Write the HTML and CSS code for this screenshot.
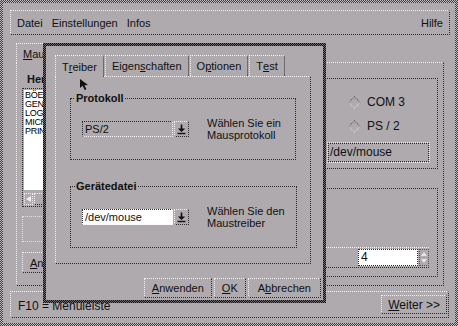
FILE: index.html
```html
<!DOCTYPE html>
<html lang="de">
<head>
    <meta charset="UTF-8">
    <meta name="viewport" content="width=device-width, initial-scale=1.0">
    <title>Maus einrichten</title>
    <link rel="stylesheet" href="styles.css">
</head>
<body>
<div class="screen">
    <!-- Hauptfenster -->
    <div class="window">
        <div class="window-inner">
            <div class="menubar">
                <span class="menu-item">Datei</span>
                <span class="menu-item">Einstellungen</span>
                <span class="menu-item">Infos</span>
                <span class="menu-item menu-help">Hilfe</span>
            </div>

            <div class="notebook notebook-rear">
                <div class="tabs">
                    <div class="tab active"><u>M</u>aus</div>
                </div>
                <div class="tab-panel rear-panel">
                    <div class="rear-left">
                        <div class="caption">Hersteller</div>
                        <div class="listbox">
                            <ul class="list">
                                <li>BÖEDER</li>
                                <li>GENIUS</li>
                                <li>LOGITECH</li>
                                <li>MICROSOFT</li>
                                <li>PRINCETON</li>
                            </ul>
                            <div class="hscroll">
                                <span class="scroll-arrow"></span>
                                <span class="scroll-thumb"></span>
                            </div>
                        </div>
                        <div class="empty-box"></div>
                        <button class="btn"><u>A</u>nwenden</button>
                    </div>
                    <div class="rear-right">
                        <div class="frame port-frame">
                            <div class="radios">
                                <label class="radio"><span class="diamond"></span>COM 1</label>
                                <label class="radio"><span class="diamond"></span>COM 3</label>
                                <label class="radio"><span class="diamond"></span>COM 2</label>
                                <label class="radio"><span class="diamond"></span>PS / 2</label>
                            </div>
                            <div class="text-field">/dev/mouse</div>
                        </div>
                        <div class="frame speed-frame">
                            <div class="spin-row">
                                <span class="spin-label">Tempo</span>
                                <div class="spinner">
                                    <span class="spin-value">4</span>
                                    <span class="spin-arrows">
                                        <span class="spin-up"></span>
                                        <span class="spin-down"></span>
                                    </span>
                                </div>
                            </div>
                        </div>
                    </div>
                </div>
            </div>

            <div class="statusbar">
                <span class="status-text">F10 = Menüleiste</span>
                <button class="btn btn-next"><u>W</u>eiter &gt;&gt;</button>
            </div>
        </div>
    </div>

    <!-- Dialog Treiber -->
    <div class="dialog">
        <div class="dialog-body">
            <div class="notebook notebook-dialog">
                <div class="tabs">
                    <div class="tab active">T<u>r</u>eiber</div>
                    <div class="tab">Eigen<u>s</u>chaften</div>
                    <div class="tab">O<u>p</u>tionen</div>
                    <div class="tab">T<u>e</u>st</div>
                </div>
                <div class="tab-panel dialog-panel">
                    <fieldset class="group-box">
                        <legend>Protokoll</legend>
                        <div class="option-row">
                            <div class="combo">
                                <span class="combo-field">PS/2</span>
                                <span class="drop-btn">
                                    <svg width="9" height="11" viewBox="0 0 9 11">
                                        <path d="M4.5 0.5 V5" stroke="#111" stroke-width="1.6"/>
                                        <path d="M0.8 4.5 H8.2 L4.5 8 Z" fill="#111"/>
                                        <path d="M0.5 9.5 H8.5" stroke="#111" stroke-width="1.4"/>
                                    </svg>
                                </span>
                            </div>
                            <p class="hint">Wählen Sie ein<br>Mausprotokoll</p>
                        </div>
                    </fieldset>
                    <fieldset class="group-box group-second">
                        <legend>Gerätedatei</legend>
                        <div class="option-row">
                            <div class="combo">
                                <span class="combo-field combo-edit">/dev/mouse</span>
                                <span class="drop-btn">
                                    <svg width="9" height="11" viewBox="0 0 9 11">
                                        <path d="M4.5 0.5 V5" stroke="#111" stroke-width="1.6"/>
                                        <path d="M0.8 4.5 H8.2 L4.5 8 Z" fill="#111"/>
                                        <path d="M0.5 9.5 H8.5" stroke="#111" stroke-width="1.4"/>
                                    </svg>
                                </span>
                            </div>
                            <p class="hint">Wählen Sie den<br>Maustreiber</p>
                        </div>
                    </fieldset>
                </div>
            </div>
            <div class="dialog-buttons">
                <button class="btn"><u>A</u>nwenden</button>
                <button class="btn"><u>O</u>K</button>
                <button class="btn btn-cancel">A<u>b</u>brechen</button>
            </div>
        </div>
        <svg class="cursor" width="11" height="12" viewBox="0 0 11 12">
            <path d="M0 0 L0 9 L2.6 6.8 L4.6 11 L6.4 10.2 L4.5 6.2 L8 6 Z" fill="#111"/>
        </svg>
    </div>
</div>
</body>
</html>
```

FILE: styles.css
```css
* {
    box-sizing: border-box;
}
body {
    margin: 0;
    font-family: "Liberation Sans", Arial, sans-serif;
    font-size: 11px;
    color: #111;
    background: #aeaaae;
}
u {
    text-underline-offset: 1px;
}
.screen {
    position: relative;
    width: 458px;
    height: 326px;
    overflow: hidden;
}

/* Hauptfenster */
.window {
    height: 100%;
    padding: 3px;
    background: repeating-conic-gradient(#3a3a3a 0 25%, #c4c0c4 0 50%) 0 0 / 2px 2px;
}
.window-inner {
    height: 100%;
    background: #aeaaae;
    padding: 7px 5px 5px 7px;
    display: flex;
    flex-direction: column;
}
.menubar {
    height: 25px;
    display: flex;
    align-items: center;
    gap: 9px;
    padding: 0 6px;
    border: 1px dotted;
    border-color: #f4f0f4 #2c2c2c #2c2c2c #f4f0f4;
}
.menu-help {
    margin-left: auto;
}

/* Karteireiter */
.tabs {
    display: flex;
    gap: 1px;
    position: relative;
    z-index: 1;
}
.tab {
    height: 21px;
    padding: 0 6px;
    display: flex;
    align-items: center;
    border: 1px dotted;
    border-bottom: none;
    border-color: #f4f0f4 #2c2c2c #f4f0f4 #f4f0f4;
    border-radius: 0 3px 0 0;
    background: #aeaaae;
}
.tab.active {
    height: 22px;
    margin-bottom: -1px;
}
.tab-panel {
    border: 1px dotted;
    border-color: #f4f0f4 #2c2c2c #2c2c2c #f4f0f4;
}

.notebook-rear {
    margin: 8px 6px 0 6px;
}
.notebook-rear .tab {
    height: 19px;
}
.notebook-rear .tab.active {
    height: 20px;
}
.rear-panel {
    height: 224px;
    padding: 10px 5px 0 5px;
    display: flex;
    justify-content: space-between;
}
.rear-left {
    width: 150px;
    display: flex;
    flex-direction: column;
    align-items: flex-start;
}
.caption {
    font-weight: bold;
    line-height: 13px;
    padding-left: 5px;
}
.listbox {
    width: 150px;
    margin-top: 2px;
    padding: 1px;
    border: 1px dotted #2c2c2c;
}
.list {
    list-style: none;
    margin: 0;
    padding: 1px 0 0 1px;
    height: 100px;
    background: #fff;
    color: #000;
    font-size: 9px;
    line-height: 9px;
    letter-spacing: -0.3px;
}
.hscroll {
    margin-top: 3px;
    height: 12px;
    display: flex;
    gap: 1px;
}
.scroll-arrow {
    width: 9px;
    border: 1px dotted #f4f0f4;
}
.scroll-arrow::after {
    content: "";
    display: block;
    margin: 2px 0 0 1px;
    border-right: 5px solid #f4f0f4;
    border-top: 3px solid transparent;
    border-bottom: 3px solid transparent;
    width: 0;
}
.scroll-thumb {
    width: 12px;
    border: 1px dotted;
    border-color: #f4f0f4 #2c2c2c #2c2c2c #f4f0f4;
}
.empty-box {
    width: 150px;
    height: 26px;
    margin-top: 9px;
    border: 1px dotted #e4e0e4;
}
.rear-left .btn {
    margin-top: 10px;
    height: 21px;
}

.rear-right {
    width: 248px;
    padding-top: 5px;
}
.frame {
    border: 1px dotted #2c2c2c;
}
.port-frame {
    padding: 15px 8px 6px 8px;
    display: flex;
    flex-direction: column;
}
.radios {
    display: grid;
    grid-template-columns: 149px 1fr;
    grid-auto-rows: 16px;
    row-gap: 8px;
}
.radio {
    display: flex;
    align-items: center;
    gap: 7px;
    font-size: 12px;
}
.diamond {
    width: 9px;
    height: 9px;
    margin: 0 1px 0 2px;
    transform: rotate(45deg);
    border: 1px dotted;
    border-color: #2c2c2c #f4f0f4 #f4f0f4 #2c2c2c;
}
.text-field {
    margin: 9px 0 0 auto;
    width: 101px;
    height: 19px;
    line-height: 17px;
    padding: 0 1px;
    border: 1px dotted #2c2c2c;
    outline: 1px dotted #ece8ec;
    font-size: 12px;
}
.speed-frame {
    margin-top: 19px;
    height: 89px;
    padding: 0 8px 8px 8px;
    display: flex;
    flex-direction: column;
    justify-content: flex-end;
}
.spin-row {
    height: 21px;
    display: flex;
    align-items: center;
    justify-content: space-between;
    border-top: 1px dotted #f4f0f4;
    border-bottom: 1px dotted #2c2c2c;
}
.spinner {
    display: flex;
    gap: 1px;
}
.spin-value {
    width: 60px;
    height: 17px;
    line-height: 15px;
    padding-left: 2px;
    background: #fff;
    border: 1px dotted #2c2c2c;
    font-size: 12px;
}
.spin-arrows {
    width: 10px;
    display: flex;
    flex-direction: column;
    justify-content: space-around;
    align-items: center;
    border: 1px dotted #555;
}
.spin-up {
    border-bottom: 4px solid #e8e4e8;
    border-left: 3px solid transparent;
    border-right: 3px solid transparent;
}
.spin-down {
    border-top: 4px solid #e8e4e8;
    border-left: 3px solid transparent;
    border-right: 3px solid transparent;
}

.statusbar {
    margin: 5px 1px 0 0;
    height: 27px;
    padding: 0 1px 0 7px;
    display: flex;
    align-items: center;
    justify-content: space-between;
    border: 1px dotted;
    border-color: #f4f0f4 #2c2c2c #2c2c2c #f4f0f4;
    font-size: 12px;
}
.status-text {
    padding-top: 3px;
}

/* Knöpfe */
.btn {
    font: inherit;
    font-size: 11px;
    color: #111;
    height: 20px;
    padding: 0 7px;
    background: #aeaaae;
    border: 1px dotted;
    border-color: #f4f0f4 #2c2c2c #2c2c2c #f4f0f4;
    white-space: nowrap;
    cursor: pointer;
}
.btn-cancel {
    padding: 0 9px;
}
.btn-next {
    height: 19px;
    font-size: 12px;
    padding: 0 6px;
}

/* Dialog */
.dialog {
    position: absolute;
    left: 43px;
    top: 43px;
    width: 283px;
    height: 260px;
    padding: 3px;
    z-index: 5;
    background: repeating-conic-gradient(#111 0 25%, #6e6a6e 0 50%) 0 0 / 2px 2px;
}
.dialog-body {
    height: 100%;
    background: #aeaaae;
    padding: 9px 2px 2px 9px;
    display: flex;
    flex-direction: column;
}
.notebook-dialog {
    margin-right: 10px;
}
.dialog-panel {
    height: 188px;
    padding: 0 14px;
}
.group-box {
    margin: 15px 0 0 0;
    padding: 0 11px 18px 11px;
    border: 1px dotted #2c2c2c;
}
.group-second {
    margin-top: 20px;
}
.group-box legend {
    font-weight: bold;
    line-height: 13px;
    padding: 0 1px;
    margin-left: -7px;
}
.option-row {
    margin-top: 12px;
    display: flex;
    align-items: center;
}
.combo {
    display: flex;
    gap: 1px;
    flex-shrink: 0;
}
.combo-field {
    width: 91px;
    height: 16px;
    line-height: 14px;
    padding-left: 2px;
    border: 1px dotted;
    border-color: #2c2c2c #f4f0f4 #f4f0f4 #2c2c2c;
}
.combo-edit {
    background: #fff;
}
.drop-btn {
    width: 15px;
    height: 16px;
    display: flex;
    align-items: center;
    justify-content: center;
    border: 1px dotted;
    border-color: #f4f0f4 #2c2c2c #2c2c2c #f4f0f4;
}
.hint {
    margin: 0 0 0 18px;
    line-height: 12px;
    white-space: nowrap;
}
.dialog-buttons {
    margin-top: 14px;
    display: flex;
    justify-content: flex-end;
    gap: 2px;
}
.cursor {
    position: absolute;
    left: 37px;
    top: 36px;
}
```
